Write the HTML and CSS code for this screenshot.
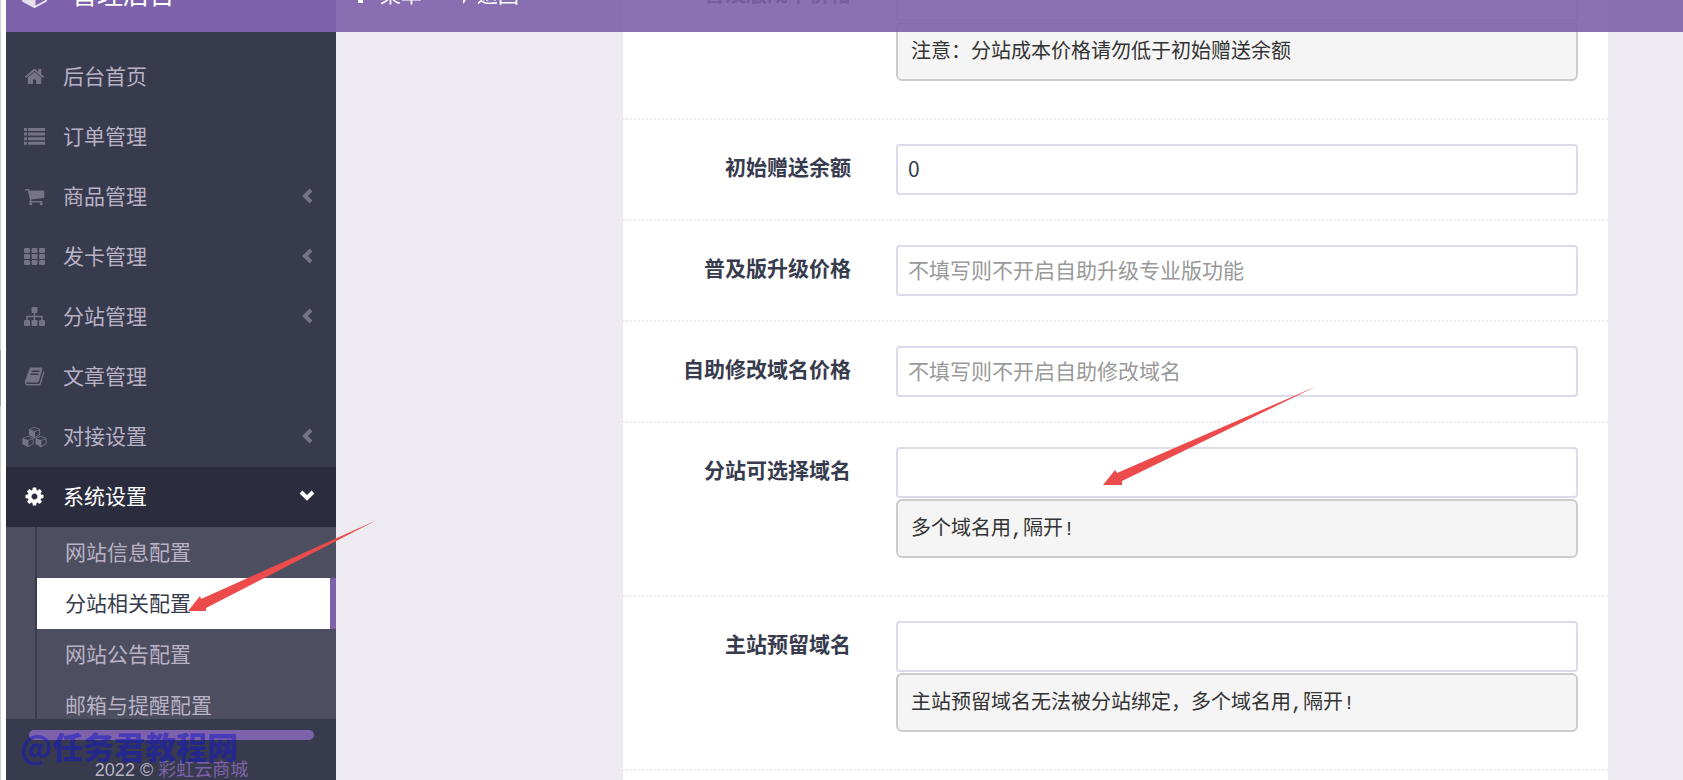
FILE: index.html
```html
<!DOCTYPE html>
<html lang="zh-CN">
<head>
<meta charset="utf-8">
<title>管理后台</title>
<link rel="stylesheet" href="styles.css">
</head>
<body>
<svg class="defs" aria-hidden="true">
  <symbol id="cube" viewBox="0 0 1664 1792"><path d="M896 1629l640-349v-636l-640 233v752zm-64-865l698-254-698-254-698 254zm832-252v768q0 35-18 65t-49 47l-704 384q-28 16-61 16t-61-16l-704-384q-31-17-49-47t-18-65v-768q0-40 23-73t61-47l704-256q22-8 44-8t44 8l704 256q38 14 61 47t23 73z"/></symbol>
  <symbol id="chevron" viewBox="0 0 12 16"><path d="M10 2L4 8l6 6" fill="none" stroke="currentColor" stroke-width="4"/></symbol>
</svg>
<div class="app">
  <div class="edge"><div class="edge-thumb"></div></div>

  <aside class="sidebar">
    <nav class="menu">
      <a class="item" href="#"><svg class="icon" viewBox="0 0 1792 1792"><path d="M1472 992v480q0 26-19 45t-45 19h-384v-384h-256v384h-384q-26 0-45-19t-19-45v-480q0-1 .5-3t.5-3l575-474 575 474q1 2 1 6zm223-69l-62 74q-8 9-21 11h-3q-13 0-21-7l-692-577-692 577q-12 8-24 7-13-2-21-11l-62-74q-8-10-7-23.500t11-21.500l719-599q32-26 76-26t76 26l244 204v-195q0-14 9-23t23-9h192q14 0 23 9t9 23v408l219 182q10 8 11 21.500t-7 23.500z"/></svg><span>后台首页</span></a>
      <a class="item" href="#"><svg class="icon" viewBox="0 0 21 21"><path d="M0 2h3v3H0zM4 2h17v3H4zM0 6.600h3v3H0zM4 6.600h17v3H4zM0 11.200h3v3H0zM4 11.200h17v3H4zM0 15.800h3v3H0zM4 15.800h17v3H4z"/></svg><span>订单管理</span></a>
      <a class="item" href="#"><svg class="icon" viewBox="0 0 1792 1792"><path d="M704 1536q0 52-38 90t-90 38-90-38-38-90 38-90 90-38 90 38 38 90zm896 0q0 52-38 90t-90 38-90-38-38-90 38-90 90-38 90 38 38 90zm128-1088v512q0 24-16.500 42.500t-40.500 21.500l-1044 122q13 60 13 70 0 16-24 64h920q26 0 45 19t19 45-19 45-45 19h-1024q-26 0-45-19t-19-45q0-11 8-31.500t16-36 21.500-40 15.500-29.500l-177-823h-204q-26 0-45-19t-19-45 19-45 45-19h256q16 0 28.500 6.500t19.500 15.500 13 24.500 8 26 5.500 29.500 4.500 26h1201q26 0 45 19t19 45z"/></svg><span>商品管理</span><svg class="chevron"><use href="#chevron"/></svg></a>
      <a class="item" href="#"><svg class="icon" viewBox="0 0 21 21"><g><rect x="0" y="2" width="6" height="5" rx="1.300"/><rect x="7.500" y="2" width="6" height="5" rx="1.300"/><rect x="15" y="2" width="6" height="5" rx="1.300"/><rect x="0" y="8" width="6" height="5" rx="1.300"/><rect x="7.500" y="8" width="6" height="5" rx="1.300"/><rect x="15" y="8" width="6" height="5" rx="1.300"/><rect x="0" y="14" width="6" height="5" rx="1.300"/><rect x="7.500" y="14" width="6" height="5" rx="1.300"/><rect x="15" y="14" width="6" height="5" rx="1.300"/></g></svg><span>发卡管理</span><svg class="chevron"><use href="#chevron"/></svg></a>
      <a class="item" href="#"><svg class="icon" viewBox="0 0 21 21"><rect x="7.500" y="1" width="6" height="6" rx="1.300"/><rect x="0" y="14" width="6" height="6" rx="1.300"/><rect x="7.500" y="14" width="6" height="6" rx="1.300"/><rect x="15" y="14" width="6" height="6" rx="1.300"/><path d="M10.500 6v9M3 15v-4.500h15V15" fill="none" stroke="currentColor" stroke-width="1.500"/></svg><span>分站管理</span><svg class="chevron"><use href="#chevron"/></svg></a>
      <a class="item" href="#"><svg class="icon" viewBox="0 0 1792 1792"><path d="M1703 478q40 57 18 129l-275 906q-19 64-76.500 107.500t-122.500 43.500h-923q-77 0-148.500-53.500t-99.500-131.500q-24-67-2-127 0-4 3-27t4-37q1-8-3-21.500t-3-19.500q2-11 8-21t16.500-23.500 16.500-23.500q23-38 45-91.500t30-91.500q3-10 .5-30t-.5-28q3-11 17-28t17-23q21-36 42-92t25-90q1-9-2.500-32t.5-28q4-13 22-30.500t22-22.500q19-26 42.500-84.500t27.500-96.500q1-8-3-25.500t-2-26.500q2-8 9-18t18-23 17-21q8-12 16.500-30.500t15-35 16-36 19.500-32 26.500-23.500 36-11.500 47.500 5.500l-1 3q38-9 51-9h761q74 0 114 56t18 130l-274 906q-36 119-71.500 153.500t-128.500 34.500h-869q-27 0-38 15-11 16-1 43 24 70 144 70h923q29 0 56-15.500t35-41.500l300-987q7-22 5-57 38 15 59 43zm-1064 2q-4 13 2 22.500t20 9.500h608q13 0 25.500-9.500t16.500-22.500l21-64q4-13-2-22.500t-20-9.500h-608q-13 0-25.500 9.500t-16.500 22.500zm-83 256q-4 13 2 22.500t20 9.500h608q13 0 25.500-9.500t16.500-22.500l21-64q4-13-2-22.500t-20-9.500h-608q-13 0-25.500 9.500t-16.500 22.500z"/></svg><span>文章管理</span></a>
      <a class="item" href="#"><svg class="icon icon-wide" viewBox="0 0 27 21"><use href="#cube" x="6.500" y="0" width="14" height="12"/><use href="#cube" x="0" y="9" width="14" height="12"/><use href="#cube" x="13" y="9" width="14" height="12"/></svg><span>对接设置</span><svg class="chevron"><use href="#chevron"/></svg></a>
      <a class="item item-open" href="#"><svg class="icon" viewBox="0 0 1792 1792"><path d="M1152 896q0-106-75-181t-181-75-181 75-75 181 75 181 181 75 181-75 75-181zm512-109v222q0 12-8 23t-20 13l-185 28q-19 54-39 91 35 50 107 138 10 12 10 25t-9 23q-27 37-99 108t-94 71q-12 0-26-9l-138-108q-44 23-91 38-16 136-29 186-7 28-36 28h-222q-14 0-24.500-8.500t-11.500-21.500l-28-184q-49-16-90-37l-141 107q-10 9-25 9-14 0-25-11-126-114-165-168-7-10-7-23 0-12 8-23 15-21 51-66.500t54-70.500q-27-50-41-99l-183-27q-13-2-21-12.500t-8-23.500v-222q0-12 8-23t19-13l186-28q14-46 39-92-40-57-107-138-10-12-10-24 0-10 9-23 26-36 98.500-107.500t94.500-71.500q13 0 26 10l138 107q44-23 91-38 16-136 29-186 7-28 36-28h222q14 0 24.500 8.500t11.500 21.500l28 184q49 16 90 37l142-107q9-9 24-9 13 0 25 10 129 119 165 170 7 8 7 22 0 12-8 23-15 21-51 66.500t-54 70.500q26 50 41 98l183 28q13 2 21 12.500t8 23.500z"/></svg><span>系统设置</span><svg class="chevron chevron-down"><use href="#chevron"/></svg></a>
      <div class="submenu">
        <a class="subitem" href="#">网站信息配置</a>
        <a class="subitem subitem-active" href="#">分站相关配置</a>
        <a class="subitem" href="#">网站公告配置</a>
        <a class="subitem" href="#">邮箱与提醒配置</a>
      </div>
    </nav>
    <footer class="side-footer">
      <div class="bar"></div>
      <div class="copyright">2022 © <a href="#">彩虹云商城</a></div>
    </footer>
  </aside>

  <main class="main">
    <form class="panel">
      <div class="row">
        <label for="cost">普及版成本价格</label>
        <div class="field"><input id="cost" type="text"><pre>注意：分站成本价格请勿低于初始赠送余额</pre></div>
      </div>
      <div class="row">
        <label for="gift">初始赠送余额</label>
        <div class="field"><input id="gift" type="text" value="0"></div>
      </div>
      <div class="row">
        <label for="upgrade">普及版升级价格</label>
        <div class="field"><input id="upgrade" type="text" placeholder="不填写则不开启自助升级专业版功能"></div>
      </div>
      <div class="row">
        <label for="change">自助修改域名价格</label>
        <div class="field"><input id="change" type="text" placeholder="不填写则不开启自助修改域名"></div>
      </div>
      <div class="row">
        <label for="domains">分站可选择域名</label>
        <div class="field"><input id="domains" type="text"><pre>多个域名用,隔开!</pre></div>
      </div>
      <div class="row">
        <label for="reserved">主站预留域名</label>
        <div class="field"><input id="reserved" type="text"><pre>主站预留域名无法被分站绑定，多个域名用,隔开!</pre></div>
      </div>
      <div class="row"></div>
    </form>
  </main>
</div>

<header class="topbar">
  <a class="brand" href="#"><svg class="brand-icon"><use href="#cube"/></svg><span>管理后台</span></a>
  <nav class="topnav">
    <a href="#"><svg class="top-icon" viewBox="0 0 20 20"><path d="M8 1h5v4H8zM8 7h5v4H8zM8 13h5v5H8z"/></svg><span>菜单</span></a>
    <a href="#"><svg class="top-icon" viewBox="0 0 20 20"><path d="M0 7l7-6v4c8 0 12 3 12 8 0 2-1 4-3 6 1-6-2-8-9-8v3z"/></svg><span>返回</span></a>
  </nav>
</header>

<svg class="arrow arrow-side" viewBox="0 0 190 94" aria-hidden="true"><path d="M0 91l12-15 1 3L189 0 18 88v3z"/></svg>
<svg class="arrow arrow-form" viewBox="0 0 216 100" aria-hidden="true"><path d="M0 99l12-15 2 3L214 0 19 95v4z"/></svg>
<div class="watermark">@任务君教程网</div>
</body>
</html>
```
FILE: styles.css
```css
* { box-sizing: border-box; }

body {
  margin: 0;
  overflow: hidden;
  background: #fff;
  color: #373b4d;
  font-family: "Liberation Sans", "Noto Sans CJK SC", sans-serif;
  font-size: 21px;
}

a { color: inherit; text-decoration: none; }
svg { fill: currentColor; flex: none; }
.defs { position: absolute; width: 0; height: 0; }

.app {
  display: grid;
  grid-template-columns: 6px 330px 1fr;
  grid-template-rows: 100vh;
}

.edge { border-left: 1px solid #cdcdcd; padding-top: 350px; }
.edge-thumb { width: 1px; height: 56px; margin-left: -1px; background: #a0a0a0; }

.sidebar {
  display: flex;
  flex-direction: column;
  padding-top: 47px;
  background: #373b4d;
  color: #b9b1c5;
  overflow: hidden;
}
.menu { flex: 1; min-height: 0; overflow: hidden; }

.item {
  display: flex;
  align-items: center;
  height: 60px;
  padding: 0 23px 2px 18px;
}
.item span { flex: 1; margin-left: 18px; padding-bottom: 2px; }
.icon { width: 21px; height: 21px; color: #777387; }
.icon-wide { width: 27px; margin: 0 -3px; }
.chevron { width: 12px; height: 16px; color: #777387; }
.chevron-down { transform: rotate(-90deg); }
.item-open { background: #2b2d3e; color: #fff; }
.item-open .icon, .item-open .chevron { color: #fff; }

.submenu { padding-left: 29px; background: #4d4f60; }
.subitem {
  display: block;
  height: 51px;
  padding-left: 28px;
  border-left: 2px solid #373b4d;
  line-height: 51px;
}
.subitem-active {
  border-right: 6px solid #7d62ab;
  background: #fff;
  color: #373b4d;
}

.side-footer { height: 61px; padding: 11px 22px 0 23px; }
.bar { height: 10px; border-radius: 5px; background: #7d62ab; }
.copyright {
  margin-top: 18px;
  text-align: center;
  font-size: 18px;
  line-height: 24px;
}
.copyright a { color: #7d62ab; }

.main {
  padding: 0 75px 0 287px;
  background: #eeebf2;
  overflow: hidden;
}
.panel { margin-top: -56px; background: #fff; }

.row {
  display: grid;
  grid-template-columns: 228px 1fr;
  gap: 45px;
  padding: 24px 30px 24px 0;
  border-top: 2px dotted #edebf2;
}
.row:has(pre) { padding-bottom: 37px; }
.row label {
  padding-top: 8px;
  line-height: 32px;
  text-align: right;
  font-weight: bold;
}
.field input {
  display: block;
  width: 100%;
  height: 51px;
  padding: 0 11px 3px 10px;
  border: 2px solid #dddbe9;
  border-radius: 4px;
  background: #fff;
  color: #373b4d;
  font: 21px "Noto Sans CJK SC", sans-serif;
}
.field input::placeholder { color: #999; }
.field pre {
  margin: 1px 0 0;
  padding: 14px 13px 12px;
  border: 2px solid #ccc;
  border-radius: 6px;
  background: #f5f5f5;
  color: #333;
  font: 20px/29px "Liberation Mono", "Noto Sans CJK SC", monospace;
}

.topbar {
  position: fixed;
  top: -43px;
  left: 6px;
  right: 0;
  display: flex;
  height: 75px;
  color: #fff;
}
.topbar span { padding-bottom: 4px; }
.brand {
  display: flex;
  align-items: center;
  gap: 24px;
  width: 330px;
  padding-left: 16px;
  background: #7d62ab;
  font-size: 26px;
}
.brand-icon { width: 25px; height: 27px; opacity: .8; }
.topnav {
  display: flex;
  flex: 1;
  align-items: center;
  gap: 25px;
  padding-left: 14px;
  background: rgba(125, 98, 171, .9);
}
.topnav a { display: flex; align-items: center; gap: 10px; }
.top-icon { width: 20px; height: 20px; }

.arrow { position: fixed; color: #ec4b4b; }
.arrow-side { top: 520px; left: 188px; width: 190px; }
.arrow-form { top: 386px; left: 1103px; width: 216px; }

.watermark {
  position: fixed;
  top: 723px;
  left: 20px;
  color: rgba(20, 20, 200, .5);
  font: 900 31px/46px "Noto Sans CJK SC", sans-serif;
}
```
